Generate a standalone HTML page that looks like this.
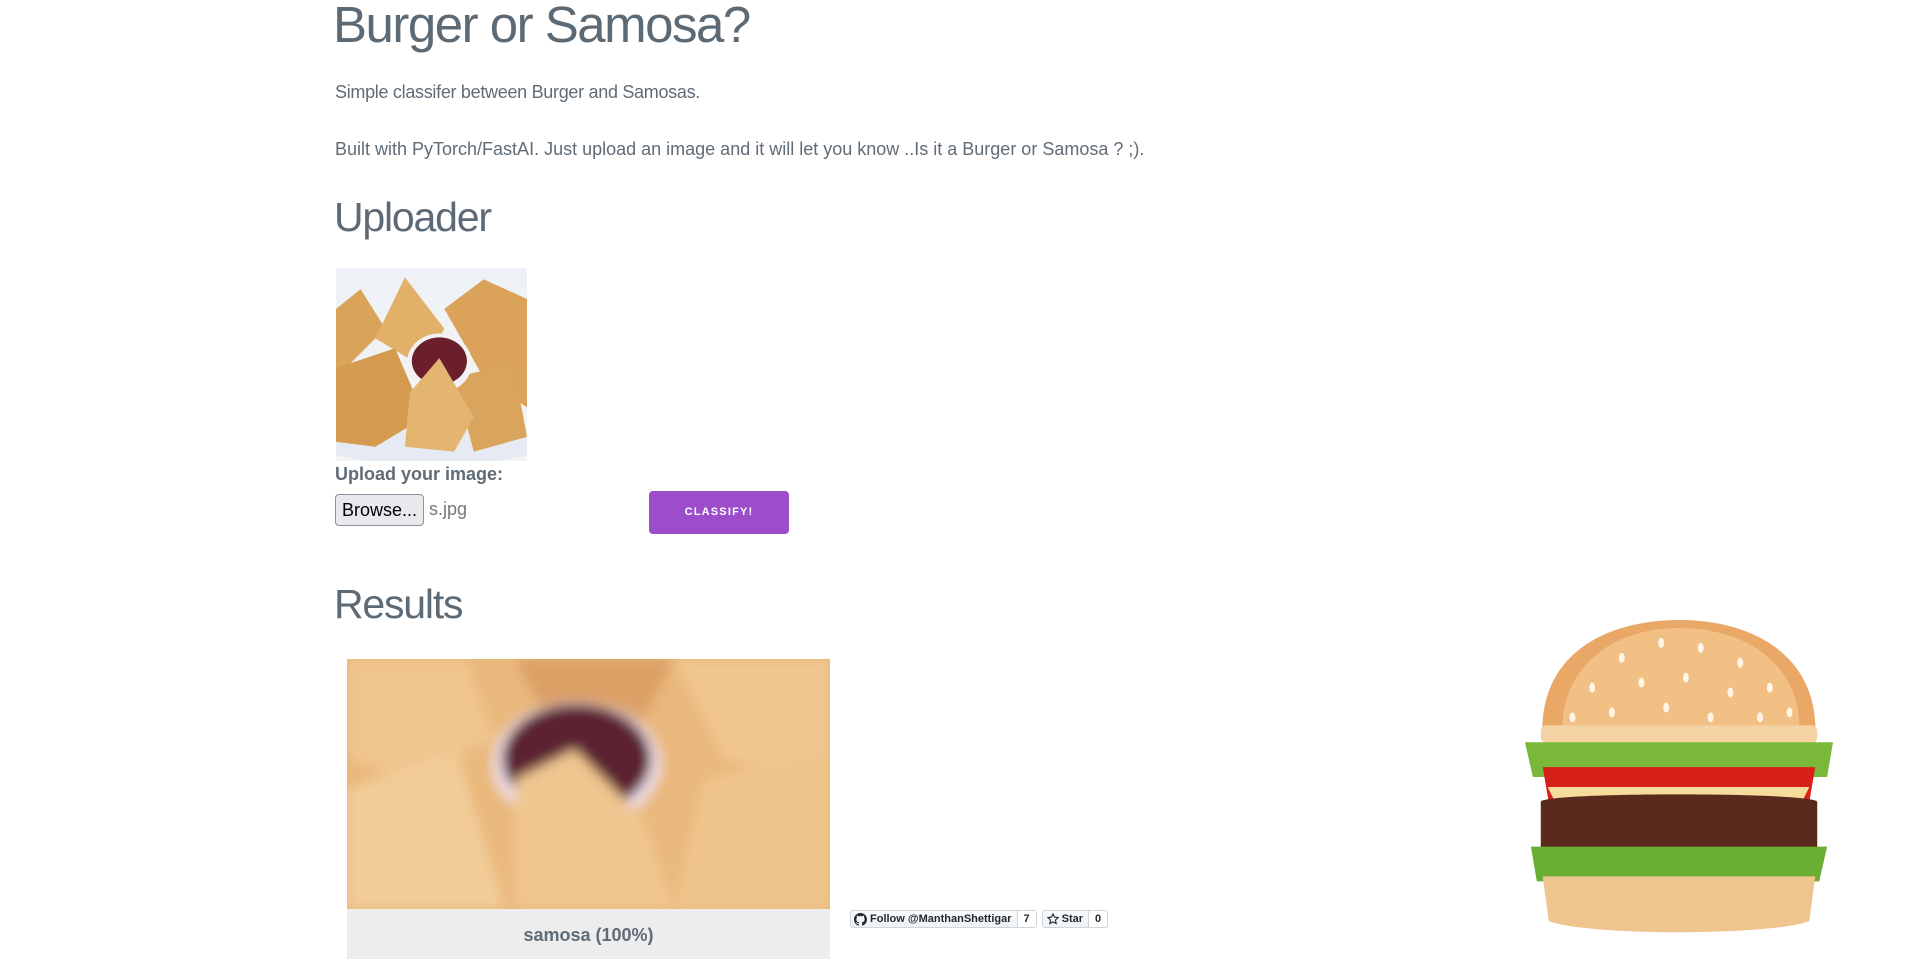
<!DOCTYPE html>
<html><head><meta charset="utf-8"><style>
html,body{margin:0;padding:0;background:#fff;width:1908px;height:959px;overflow:hidden;position:relative;font-family:"Liberation Sans",sans-serif;color:#606c76}
.a{position:absolute;white-space:nowrap}
</style></head><body>
<div class="a" style="left:333px;top:-5px;font-size:51px;letter-spacing:-1.5px;color:#5c6a76;line-height:60px">Burger or Samosa?</div>
<div class="a" style="left:335px;top:80px;font-size:18px;letter-spacing:-0.3px;line-height:24px">Simple classifer between Burger and Samosas.</div>
<div class="a" style="left:335px;top:137px;font-size:18px;letter-spacing:0px;line-height:24px">Built with PyTorch/FastAI. Just upload an image and it will let you know ..Is it a Burger or Samosa ? ;).</div>
<div class="a" style="left:334px;top:192px;font-size:41px;letter-spacing:-1.2px;color:#5c6a76;line-height:50px">Uploader</div>

<div class="a" style="left:336px;top:268px;width:191px;height:193px;overflow:hidden;background:linear-gradient(#eef1f6,#f4f4f4)">
<svg width="191" height="193" viewBox="0 0 194 193">
<ellipse cx="97" cy="180" rx="110" ry="18" fill="#e6eaf2"/>
<path d="M0 40 L25 20 L50 60 L0 110Z" fill="#d9a45a"/>
<path d="M40 70 L70 8 L110 60 L90 100Z" fill="#e2b068"/>
<path d="M110 40 L150 10 L194 30 L194 140 L150 110Z" fill="#dba35a"/>
<path d="M0 100 L60 80 L90 150 L40 180 L0 175Z" fill="#d49a50"/>
<path d="M120 110 L180 95 L194 170 L140 185Z" fill="#d9a45c"/>
<ellipse cx="105" cy="95" rx="33" ry="30" fill="#f2f2f5"/>
<ellipse cx="105" cy="93" rx="28" ry="24" fill="#6a1f2a"/>
<path d="M75 125 L105 90 L140 150 L120 185 L70 180Z" fill="#e4b570"/>
</svg></div>

<div class="a" style="left:335px;top:463px;font-size:18px;font-weight:bold;color:#606c76;line-height:22px">Upload your image:</div>
<div class="a" style="left:335px;top:494px;width:87px;height:30px;border:1px solid #8f8f9d;border-radius:4px;background:#e9e9ed;font-size:18px;color:#000;line-height:30px;text-align:center">Browse...</div>
<div class="a" style="left:429px;top:497px;font-size:18px;color:#777;line-height:24px">s.jpg</div>
<div class="a" style="left:649px;top:491px;width:140px;height:43px;background:#9b4dca;border-radius:4px;color:#fff;font-size:11px;font-weight:bold;letter-spacing:1.2px;text-align:center;line-height:43px">CLASSIFY!</div>

<div class="a" style="left:334px;top:579px;font-size:41px;letter-spacing:-1.2px;color:#5c6a76;line-height:50px">Results</div>

<div class="a" style="left:347px;top:659px;width:483px;height:250px;overflow:hidden;background:#e8b77a">
<svg width="483" height="250" viewBox="0 0 488 250" preserveAspectRatio="none">
<defs><filter id="b"><feGaussianBlur stdDeviation="6"/></filter></defs>
<g filter="url(#b)">
<rect width="488" height="250" fill="#e9b87c"/>
<path d="M0 0 L120 0 L150 80 L60 120 L0 100Z" fill="#f0c58e"/>
<path d="M170 0 L330 0 L300 60 L200 60Z" fill="#dca066"/>
<path d="M330 0 L488 0 L488 120 L380 100Z" fill="#f1c690"/>
<path d="M0 130 L110 90 L160 250 L0 250Z" fill="#f2cc98"/>
<path d="M360 120 L488 90 L488 250 L330 250Z" fill="#efc48c"/>
<ellipse cx="232" cy="105" rx="85" ry="62" fill="#eee0e8"/>
<ellipse cx="232" cy="100" rx="75" ry="55" fill="#5b2232"/>
<path d="M170 120 L230 90 L300 160 L330 250 L170 250Z" fill="#f0c690"/>
</g></svg></div>
<div class="a" style="left:347px;top:909px;width:483px;height:50px;background:#ededed;text-align:center;font-size:18px;font-weight:bold;color:#606c76;line-height:52px">samosa (100%)</div>

<div class="a" style="left:850px;top:910px;height:18px;display:flex;font-size:11px;font-weight:bold;color:#24292e;line-height:17px">
<div style="border:1px solid #d1d5da;border-radius:3px 0 0 3px;background:linear-gradient(#fafbfc,#eff3f6);padding:0 5px 0 3px;display:flex;align-items:center">
<svg width="13" height="13" viewBox="0 0 16 16" style="margin-right:3px"><path fill="#24292e" d="M8 0C3.6 0 0 3.6 0 8c0 3.5 2.3 6.5 5.5 7.6.4.1.5-.2.5-.4v-1.4c-2.2.5-2.7-1-2.7-1-.4-.9-.9-1.2-.9-1.2-.7-.5.1-.5.1-.5.8.1 1.2.8 1.2.8.7 1.2 1.9.9 2.3.7.1-.5.3-.9.5-1.1-1.8-.2-3.6-.9-3.6-4 0-.9.3-1.6.8-2.1-.1-.2-.4-1 .1-2.1 0 0 .7-.2 2.2.8.6-.2 1.3-.3 2-.3s1.4.1 2 .3c1.5-1 2.2-.8 2.2-.8.4 1.1.2 1.9.1 2.1.5.6.8 1.3.8 2.1 0 3.1-1.9 3.7-3.6 3.9.3.3.5.8.5 1.5v2.2c0 .2.1.5.6.4C13.7 14.5 16 11.5 16 8c0-4.4-3.6-8-8-8z"/></svg>Follow @ManthanShettigar</div>
<div style="border:1px solid #d1d5da;border-left:0;border-radius:0 3px 3px 0;background:#fff;padding:0 6px">7</div>
<div style="width:5px"></div>
<div style="border:1px solid #d1d5da;border-radius:3px 0 0 3px;background:linear-gradient(#fafbfc,#eff3f6);padding:0 5px 0 4px;display:flex;align-items:center">
<svg width="12" height="12" viewBox="0 0 14 14" style="margin-right:3px"><path fill="none" stroke="#24292e" stroke-width="1.3" d="M7 1l1.8 3.8 4.2.5-3.1 2.9.8 4.1L7 10.3 3.3 12.3l.8-4.1L1 5.3l4.2-.5z"/></svg>Star</div>
<div style="border:1px solid #d1d5da;border-left:0;border-radius:0 3px 3px 0;background:#fff;padding:0 6px">0</div>
</div>

<svg class="a" style="left:1523px;top:618px" width="312" height="318" viewBox="0 0 316 320" preserveAspectRatio="none">
<path d="M20 120 C15 40 80 2 158 2 C236 2 300 40 296 120 Z" fill="#e9a866"/>
<path d="M40 110 C40 50 90 10 158 10 C230 10 280 50 280 110Z" fill="#f2bf85"/>
<g fill="#fff6e6">
<ellipse cx="100" cy="40" rx="3" ry="5"/><ellipse cx="140" cy="25" rx="3" ry="5"/><ellipse cx="180" cy="30" rx="3" ry="5"/><ellipse cx="220" cy="45" rx="3" ry="5"/><ellipse cx="70" cy="70" rx="3" ry="5"/><ellipse cx="120" cy="65" rx="3" ry="5"/><ellipse cx="165" cy="60" rx="3" ry="5"/><ellipse cx="210" cy="75" rx="3" ry="5"/><ellipse cx="250" cy="70" rx="3" ry="5"/><ellipse cx="90" cy="95" rx="3" ry="5"/><ellipse cx="145" cy="90" rx="3" ry="5"/><ellipse cx="190" cy="100" rx="3" ry="5"/><ellipse cx="240" cy="100" rx="3" ry="5"/><ellipse cx="50" cy="100" rx="3" ry="5"/><ellipse cx="270" cy="95" rx="3" ry="5"/>
</g>
<rect x="18" y="108" width="280" height="18" rx="6" fill="#f4d2a4"/>
<path d="M2 125 L314 125 L308 160 L10 160Z" fill="#7ab83a"/>
<path d="M20 150 L296 150 L290 185 L26 185Z" fill="#d8201a"/>
<path d="M25 170 L290 170 L280 190 L35 190Z" fill="#f6dc9a"/>
<path d="M18 185 C18 175 298 175 298 185 L298 240 C298 250 18 250 18 240Z" fill="#5a2a1c"/>
<path d="M8 230 L308 230 L300 265 L14 265Z" fill="#6aae34"/>
<path d="M20 260 L296 260 L290 305 C250 320 66 320 26 305Z" fill="#f0c48e"/>
</svg>
</body></html>
